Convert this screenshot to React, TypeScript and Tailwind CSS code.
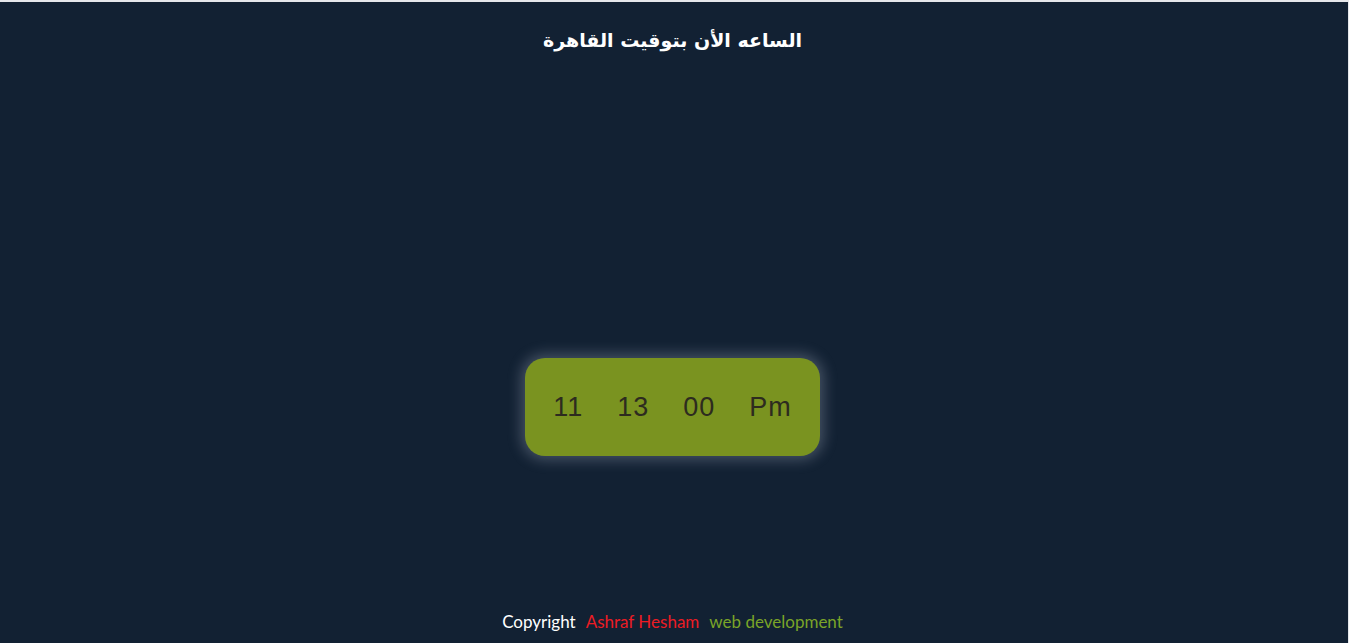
export default function App() {
  const parts = ['11', '13', '00', 'Pm']

  return (
    <div className="flex h-[643px] flex-col border-t-2 border-r border-[#e5e7eb] bg-[#122133] pr-[3px] font-['DejaVu_Sans',sans-serif]">
      <header className="pt-[22px] text-center">
        <h1 dir="rtl" className="text-[19px] font-bold leading-[32px] text-white">
          الساعه الأن بتوقيت القاهرة
        </h1>
      </header>

      <main className="flex flex-1 justify-center pt-[302px]">
        <div className="flex h-[98px] w-[295px] items-center justify-center gap-[34px] rounded-[20px] bg-[#7a9320] shadow-[0_0_14px_4px_rgba(200,210,225,0.28)]">
          {parts.map((p) => (
            <span
              key={p}
              className="font-['Liberation_Sans',sans-serif] text-[27px] leading-none tracking-[1px] text-[#2d2b1f]"
            >
              {p}
            </span>
          ))}
        </div>
      </main>

      <footer className="pb-[9px] text-center font-['Lato',sans-serif] text-[17px] leading-[24px]">
        <span className="text-white">Copyright</span>
        <span className="ml-[10px] text-[#ec1c24]">Ashraf Hesham</span>
        <span className="ml-[10px] text-[#7aa428]">web development</span>
      </footer>
    </div>
  )
}
